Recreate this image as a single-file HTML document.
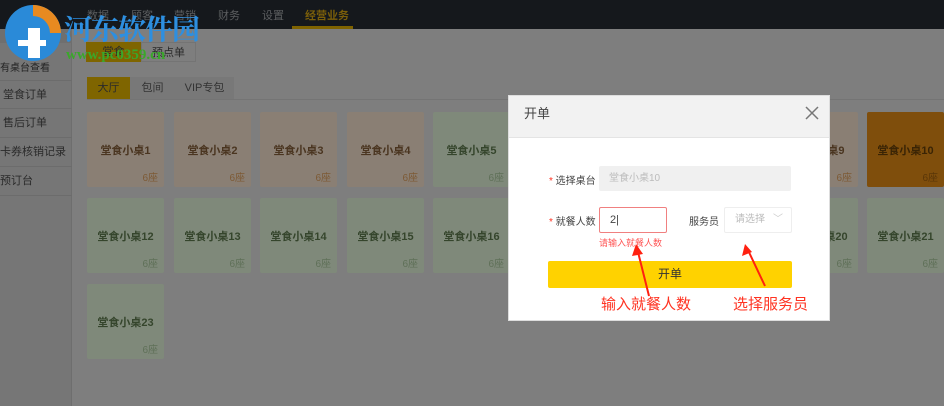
<!DOCTYPE html>
<html><head><meta charset="utf-8"><style>
*{margin:0;padding:0;box-sizing:border-box}
body{width:944px;height:406px;overflow:hidden;background:#7e7e7e;font-family:"Liberation Sans","Noto Sans CJK SC",sans-serif;position:relative;font-size:11px}
.abs{position:absolute}
.top{left:0;top:0;width:944px;height:29px;background:#15181c}
.nav{top:7px;color:#5c5e60;font-size:11px}
.side{left:0;top:29px;width:72px;height:377px;background:#767676;border-right:1px solid #6e6e6e}
.si{left:0;width:72px;height:29px;line-height:29px;color:#2a2a2a;font-size:11px;border-bottom:1px solid #6c6c6c}
.card{width:77px;height:75px;border-radius:2px}
.b{background:#8a7f74}.g{background:#7f897a}.o{background:#7f4e0c}
.card .n{position:absolute;top:30px;left:0;width:100%;text-align:center;font-weight:bold;font-size:11px}
.b .n{color:#4a3520}.g .n{color:#35452c}.o .n{color:#3a2405}
.card .s{position:absolute;right:6px;bottom:3px;font-size:10px}
.b .s{color:#7d5a35}.g .s{color:#5f7058}.o .s{color:#5a3608}
.red{color:#ff3322}
</style></head><body>
<div class="abs top"></div>
<div class="abs nav" style="left:87px">数据</div>
<div class="abs nav" style="left:131px">顾客</div>
<div class="abs nav" style="left:174px">营销</div>
<div class="abs nav" style="left:218px">财务</div>
<div class="abs nav" style="left:262px">设置</div>
<div class="abs nav" style="left:305px;color:#7a5e0a;font-weight:bold">经营业务</div>
<div class="abs" style="left:292px;top:26px;width:61px;height:3px;background:#7f6300"></div>
<div class="abs side"></div>
<div class="abs" style="left:0;top:29px;width:72px;height:14px;background:#6f6f6f"></div>
<div class="abs" style="left:0;top:59px;color:#222;font-size:10px">有桌台查看</div>
<div class="abs si" style="top:80px;border-top:1px solid #6c6c6c">&nbsp;堂食订单</div>
<div class="abs si" style="top:109px">&nbsp;售后订单</div>
<div class="abs si" style="top:138px">卡券核销记录</div>
<div class="abs si" style="top:167px">预订台</div>
<div class="abs" style="left:86px;top:42px;width:55px;height:20px;background:#7f6500;color:#2a2a2a;text-align:center;line-height:20px">堂食</div>
<div class="abs" style="left:141px;top:42px;width:55px;height:20px;border:1px solid #747474;color:#2a2a2a;text-align:center;line-height:20px">预点单</div>
<div class="abs" style="left:87px;top:77px;width:43px;height:22px;background:#7f6500;color:#2a2a2a;text-align:center;line-height:22px">大厅</div>
<div class="abs" style="left:130px;top:77px;width:45px;height:22px;background:#787878;color:#333;text-align:center;line-height:22px">包间</div>
<div class="abs" style="left:175px;top:77px;width:59px;height:22px;background:#787878;color:#333;text-align:center;line-height:22px">VIP专包</div>
<div class="abs" style="left:87px;top:99px;width:857px;height:1px;background:#747474"></div>

<div class="abs card b" style="left:87px;top:112px"><div class="n">堂食小桌1</div><div class="s">6座</div></div>
<div class="abs card b" style="left:174px;top:112px"><div class="n">堂食小桌2</div><div class="s">6座</div></div>
<div class="abs card b" style="left:260px;top:112px"><div class="n">堂食小桌3</div><div class="s">6座</div></div>
<div class="abs card b" style="left:347px;top:112px"><div class="n">堂食小桌4</div><div class="s">6座</div></div>
<div class="abs card g" style="left:433px;top:112px"><div class="n">堂食小桌5</div><div class="s">6座</div></div>
<div class="abs card b" style="left:781px;top:112px"><div class="n">堂食小桌9</div><div class="s">6座</div></div>
<div class="abs card o" style="left:867px;top:112px"><div class="n">堂食小桌10</div><div class="s">6座</div></div>
<div class="abs card g" style="left:87px;top:198px"><div class="n">堂食小桌12</div><div class="s">6座</div></div>
<div class="abs card g" style="left:174px;top:198px"><div class="n">堂食小桌13</div><div class="s">6座</div></div>
<div class="abs card g" style="left:260px;top:198px"><div class="n">堂食小桌14</div><div class="s">6座</div></div>
<div class="abs card g" style="left:347px;top:198px"><div class="n">堂食小桌15</div><div class="s">6座</div></div>
<div class="abs card g" style="left:433px;top:198px"><div class="n">堂食小桌16</div><div class="s">6座</div></div>
<div class="abs card g" style="left:781px;top:198px"><div class="n">堂食小桌20</div><div class="s">6座</div></div>
<div class="abs card g" style="left:867px;top:198px"><div class="n">堂食小桌21</div><div class="s">6座</div></div>
<div class="abs card g" style="left:87px;top:284px"><div class="n">堂食小桌23</div><div class="s">6座</div></div>

<!-- modal -->
<div class="abs" style="left:508px;top:95px;width:322px;height:226px;background:#fff;border:1px solid #ddd">
<div style="height:42px;background:#f2f2f2;border-bottom:1px solid #e4e4e4;color:#444;font-size:13px;line-height:36px;padding-left:15px">开单</div>
<svg class="abs" style="left:296px;top:10px" width="14" height="14"><path d="M1 1L13 13M13 1L1 13" stroke="#777" stroke-width="1.5"/></svg>
<div class="abs" style="left:40px;top:76px;color:#444;font-size:10px"><span class="red">*</span> 选择桌台</div>
<div class="abs" style="left:90px;top:70px;width:192px;height:25px;background:#f0f0f0;border-radius:2px;color:#bbb;font-size:10px;line-height:25px;padding-left:10px">堂食小桌10</div>
<div class="abs" style="left:40px;top:117px;color:#444;font-size:10px"><span class="red">*</span> 就餐人数</div>
<div class="abs" style="left:90px;top:111px;width:68px;height:26px;border:1px solid #f08080;border-radius:2px;color:#444;font-size:11px;line-height:24px;padding-left:10px">2|</div>
<div class="abs" style="left:90px;top:140px;color:#f55;font-size:9px">请输入就餐人数</div>
<div class="abs" style="left:180px;top:117px;color:#444;font-size:10px">服务员</div>
<div class="abs" style="left:215px;top:111px;width:68px;height:26px;border:1px solid #eee;border-radius:2px;color:#bbb;font-size:10px;line-height:24px;padding-left:10px">请选择 <span style="position:absolute;right:8px;color:#ccc">﹀</span></div>
<div class="abs" style="left:39px;top:165px;width:244px;height:27px;background:#ffd200;border-radius:2px;color:#333;text-align:center;line-height:27px;font-size:12px">开单</div>
<div class="abs red" style="left:92px;top:197px;font-size:15px">输入就餐人数</div>
<div class="abs red" style="left:224px;top:197px;font-size:15px">选择服务员</div>
<svg class="abs" style="left:0;top:0" width="322" height="226"><path d="M140 200L128 152" stroke="#ff2010" stroke-width="2"/><path d="M123 160L127 148L134 158Z" fill="#ff2010"/><path d="M256 190L238 152" stroke="#ff2010" stroke-width="2"/><path d="M233 160L236 148L243 156Z" fill="#ff2010"/></svg>
</div>

<!-- watermark -->
<svg class="abs" style="left:0;top:0" width="64" height="66"><circle cx="33" cy="33" r="28" fill="#2a8ad8"/><path d="M33 5A28 28 0 0 1 61 33L50 33A17 17 0 0 0 33 16Z" fill="#e88a20"/><path d="M28 28h12v30h-12z" fill="#fff"/><path d="M18 40h28v6h-28z" fill="#fff"/></svg>
<div class="abs" style="left:64px;top:12px;color:#2d8fe0;font-size:28px;font-weight:bold;font-family:'Noto Serif CJK SC',serif;letter-spacing:-1px;line-height:32px">河东软件园</div>
<div class="abs" style="left:66px;top:47px;color:#3aa82a;font-size:15px;font-weight:bold;font-family:'Liberation Serif',serif">www.pc0359.cn</div>
</body></html>
